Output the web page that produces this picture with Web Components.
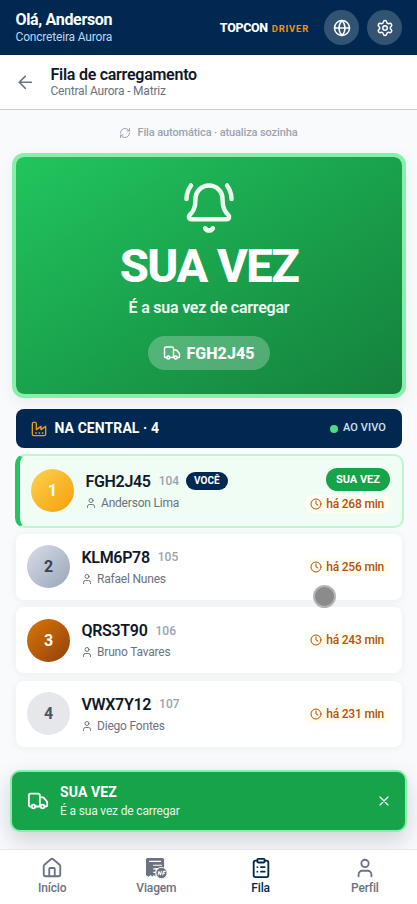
<!DOCTYPE html>
<html lang="pt-BR">
<head>
<meta charset="utf-8">
<title>Fila de carregamento</title>
<style>
html,body{margin:0;height:904px;overflow:hidden;background:#f8fafc;font-family:Roboto,"Liberation Sans",sans-serif}
</style>
</head>
<body>
<driver-app></driver-app>
<script>
const ICONS = {
  globe:'<circle cx="12" cy="12" r="10"/><path d="M12 2a14.5 14.5 0 0 0 0 20 14.5 14.5 0 0 0 0-20M2 12h20"/>',
  gear:'<path d="M9.671 4.136a2.34 2.34 0 0 1 4.659 0 2.34 2.34 0 0 0 3.319 1.915 2.34 2.34 0 0 1 2.33 4.033 2.34 2.34 0 0 0 0 3.831 2.34 2.34 0 0 1-2.33 4.033 2.34 2.34 0 0 0-3.319 1.915 2.34 2.34 0 0 1-4.659 0 2.34 2.34 0 0 0-3.32-1.915 2.34 2.34 0 0 1-2.33-4.033 2.34 2.34 0 0 0 0-3.831A2.34 2.34 0 0 1 6.35 6.051a2.34 2.34 0 0 0 3.319-1.915"/><circle cx="12" cy="12" r="3"/>',
  back:'<path d="m12 19-7-7 7-7M19 12H5"/>',
  refresh:'<path d="M3 12a9 9 0 0 1 9-9 9.75 9.75 0 0 1 6.74 2.74L21 8M21 3v5h-5M21 12a9 9 0 0 1-9 9 9.75 9.75 0 0 1-6.74-2.74L3 16M8 16H3v5"/>',
  bell:'<path d="M10.268 21a2 2 0 0 0 3.464 0M22 8c0-2.3-.8-4.3-2-6M3.262 15.326A1 1 0 0 0 4 17h16a1 1 0 0 0 .74-1.673C19.41 13.956 18 12.499 18 8A6 6 0 0 0 6 8c0 4.499-1.411 5.956-2.738 7.326M4 2C2.8 3.7 2 5.7 2 8"/>',
  truck:'<path d="M14 18V6a2 2 0 0 0-2-2H4a2 2 0 0 0-2 2v11a1 1 0 0 0 1 1h2M15 18H9M19 18h2a1 1 0 0 0 1-1v-3.65a1 1 0 0 0-.22-.624l-3.48-4.35A1 1 0 0 0 17.52 8H14"/><circle cx="17" cy="18" r="2"/><circle cx="7" cy="18" r="2"/>',
  factory:'<path d="M2 20a2 2 0 0 0 2 2h16a2 2 0 0 0 2-2V8l-7 5V8l-7 5V4a2 2 0 0 0-2-2H4a2 2 0 0 0-2 2ZM17 18h1M12 18h1M7 18h1"/>',
  user:'<path d="M19 21v-2a4 4 0 0 0-4-4H9a4 4 0 0 0-4 4v2"/><circle cx="12" cy="7" r="4"/>',
  clock:'<circle cx="12" cy="12" r="10"/><path d="M12 6v6l4 2"/>',
  close:'<path d="M18 6 6 18M6 6l12 12"/>',
  home:'<path d="M15 21v-8a1 1 0 0 0-1-1h-4a1 1 0 0 0-1 1v8"/><path d="M3 10a2 2 0 0 1 .709-1.528l7-5.999a2 2 0 0 1 2.582 0l7 5.999A2 2 0 0 1 21 10v9a2 2 0 0 1-2 2H5a2 2 0 0 1-2-2z"/>',
  list:'<rect x="8" y="2" width="8" height="4" rx="1"/><path d="M16 4h2a2 2 0 0 1 2 2v14a2 2 0 0 1-2 2H6a2 2 0 0 1-2-2V6a2 2 0 0 1 2-2h2M12 11h4M12 16h4M8 11h.01M8 16h.01"/>',
  invoice:'<path fill="currentColor" stroke="none" d="M2.500 1h16.500q1.800 0 1.800 1.800V12H11.500v9.200l-1.800-1.500-1.800 1.800-1.800-1.800-2 1.800-3-1.500V2.800Q1.100 1 2.500 1z"/><path stroke="#fff" stroke-width="1.300" stroke-linecap="butt" d="M4.500 4.700h13M9 9h9.500M9 13h4M9 16.800h2.500"/><circle cx="18" cy="17.500" r="6.200" fill="currentColor" stroke="#fff" stroke-width="1"/><path stroke="#fff" stroke-width="1.200" d="m14.400 19.500.8-3.800 1.800 3.800.8-3.800M19.300 19.500l.8-3.800h2M19.800 17.700h1.600"/>'
};
function define(name, html, update) {
  const t = document.createElement('template');
  t.innerHTML = html;
  customElements.define(name, class extends HTMLElement {
    connectedCallback() {
      if (this.shadowRoot) return;
      const root = this.attachShadow({mode:'open'});
      root.append(t.content.cloneNode(true));
      if (update) update(this, root);
    }
  });
}
define('ui-icon', `<style>:host{display:block;flex:none;line-height:0}svg{display:block;overflow:visible}</style><svg viewBox="0 0 24 24" fill="none" stroke="currentColor" stroke-linecap="round" stroke-linejoin="round"></svg>`,
  (el, root) => {
    const s = root.querySelector('svg');
    s.setAttribute('width', el.getAttribute('size'));
    s.setAttribute('height', el.getAttribute('size'));
    s.setAttribute('stroke-width', el.getAttribute('weight') || 2);
    s.innerHTML = ICONS[el.getAttribute('name')];
  });

define('app-header', `<style>
:host{display:flex;box-sizing:border-box;height:55px;background:#002850;color:#fff;padding:0 15px;align-items:center}
.who{flex:1;padding-bottom:1px;margin-left:.5px}
.hi{font-size:16px;line-height:19px;font-weight:700;letter-spacing:-.33px}
.co{font-size:12px;line-height:16px;color:#bcd7f3;letter-spacing:-.18px}
.brand{display:flex;align-items:baseline;gap:4px;margin-right:15px;font-weight:800;font-size:12.500px;letter-spacing:-.34px}
.brand span{color:#f0921e;font-size:9.500px;font-weight:700;letter-spacing:.75px}
.btn{width:35px;height:35px;border-radius:50%;background:#335373;display:grid;place-items:center}
.btn+.btn{margin-left:8px}
</style><div class="who"><div class="hi">Olá, Anderson</div><div class="co">Concreteira Aurora</div></div>
<div class="brand">TOPCON <span>DRIVER</span></div>
<div class="btn"><ui-icon name="globe" size="18"></ui-icon></div><div class="btn"><ui-icon name="gear" size="18"></ui-icon></div>`);

define('page-title', `<style>
:host{display:flex;box-sizing:border-box;height:55px;background:#fff;border-bottom:1px solid #c9ced5;padding:0 15px;align-items:center;gap:15px}
ui-icon{color:#6b7280}
.t{font-size:16px;line-height:18px;font-weight:600;color:#111827;letter-spacing:-.26px}
.s{font-size:12px;line-height:15px;color:#6b7280;letter-spacing:-.19px}
</style><ui-icon name="back" size="20.500"></ui-icon><div><div class="t"><slot name="title"></slot></div><div class="s"><slot></slot></div></div>`);

define('turn-card', `<style>
:host{display:flex;box-sizing:border-box;width:394px;height:245px;margin:0 0 0 12px;border:4px solid #86efac;border-radius:12px;background:linear-gradient(148deg,#22c55e,#1aa24c 50%,#15803d) padding-box,#86efac;flex-direction:column;align-items:center;color:#fff;box-shadow:0 5px 18px rgba(15,23,42,.06)}
ui-icon.bell{margin-top:24px;color:#ecfdf0}
.big{font-size:47px;line-height:54px;font-weight:800;margin-top:3.500px;letter-spacing:-1.5px}
.sub{font-size:16px;line-height:22px;font-weight:600;margin-top:4.500px;color:#effcf3;letter-spacing:-.22px}
.plate{display:flex;align-items:center;gap:5px;height:34px;margin-top:17px;padding:0 15px;border-radius:17px;background:rgba(255,255,255,.25);font-size:16px;font-weight:800;letter-spacing:.06px}
</style><ui-icon class="bell" name="bell" size="54"></ui-icon><div class="big">SUA VEZ</div><div class="sub">É a sua vez de carregar</div><div class="plate"><ui-icon name="truck" size="18"></ui-icon><span>FGH2J45</span></div>`);

define('section-bar', `<style>
:host{display:flex;box-sizing:border-box;height:39px;margin:11px 15px 0 16px;padding:0 16px 0 15px;border-radius:8px;background:#002850;color:#fff;align-items:center}
ui-icon{color:#f0981e;margin-right:7.500px}
.t{flex:1;font-size:14px;font-weight:700;letter-spacing:.08px;margin-top:-1px}
.live{display:flex;align-items:center;gap:5px;font-size:11px;font-weight:500;color:#cfe3f8;letter-spacing:.1px}
.live span{margin-top:-3px}
i{width:8px;height:8px;border-radius:50%;background:#4ade80}
</style><ui-icon name="factory" size="16"></ui-icon><div class="t">NA CENTRAL · 4</div><div class="live"><i></i><span>AO VIVO</span></div>`);

define('queue-row', `<style>
:host{display:flex;box-sizing:border-box;height:66px;margin:0 15px 0 16px;padding:0 12px 0 11px;border-radius:8px;background:#fff;align-items:center;box-shadow:0 1px 8px rgba(15,23,42,.06)}
:host([mine]){height:73.500px;margin:0 13px 0 15px;padding:0 12px 0 11px;border:2px solid #bbf7d0;border-left:5px solid #22c55e;border-radius:10px;background:#f0fdf4;box-shadow:none}
.pos{width:43px;height:43px;border-radius:50%;display:grid;place-items:center;font-size:16px;font-weight:700;color:#374151;flex:none}
:host([rank="1"]) .pos{background:linear-gradient(135deg,#fcd34d,#f59e0b);color:#fff}
:host([rank="2"]) .pos{background:linear-gradient(135deg,#d8dee8,#98a5b8)}
:host([rank="3"]) .pos{background:linear-gradient(135deg,#d97706,#92400e);color:#fff}
:host([rank="4"]) .pos{background:#e5e7eb;color:#4b5563}
.mid{flex:1;margin-left:11.500px;padding-top:2px}
.top{display:flex;align-items:center;height:21px}
.plate{font-size:16px;font-weight:600;color:#111827;letter-spacing:-.32px}
.num{font-size:12px;font-weight:500;color:#9ca3af;margin-left:8px}
.you{display:none;margin-left:7px;height:18px;line-height:18px;padding:0 8px;border-radius:9px;background:#002850;color:#fff;font-size:10px;font-weight:700}
.who{display:flex;align-items:center;gap:4px;font-size:12px;line-height:20px;color:#6b7280;margin-top:1px;letter-spacing:-.2px;margin-left:-.5px}
.right{display:flex;flex-direction:column;align-items:flex-end}
.turn{display:none;height:23px;line-height:23px;padding:0 10px;border-radius:12px;background:#16a34a;color:#fff;font-size:11px;font-weight:700;margin-bottom:4px}
.wait{display:flex;align-items:center;gap:4px;height:18px;padding:0 6px 0 5px;border-radius:6px;background:#fffcf1;color:#b45309;font-size:12px;font-weight:500;letter-spacing:-.2px}
:host([mine]) .you,:host([mine]) .turn{display:block}
</style><div class="pos"></div><div class="mid"><div class="top"><span class="plate"></span><span class="num"></span><span class="you">VOCÊ</span></div><div class="who"><ui-icon name="user" size="12"></ui-icon><span><slot></slot></span></div></div>
<div class="right"><div class="turn">SUA VEZ</div><div class="wait"><ui-icon name="clock" size="12"></ui-icon><span class="w"></span></div></div>`,
(el, root) => {
  root.querySelector('.pos').textContent = el.getAttribute('rank');
  root.querySelector('.plate').textContent = el.getAttribute('plate');
  root.querySelector('.num').textContent = el.getAttribute('num');
  root.querySelector('.w').textContent = 'há ' + el.getAttribute('min') + ' min';
});

define('turn-toast', `<style>
:host{display:flex;box-sizing:border-box;position:absolute;left:10px;top:770px;width:397px;height:62px;padding:0 13px 0 15px;border:2px solid #86efac;border-radius:10px;background:#16a34a;color:#fff;align-items:center;box-shadow:0 9px 22px rgba(15,23,42,.17)}
.m{flex:1;margin-left:11px}
.a{font-size:14px;line-height:19px;font-weight:700;letter-spacing:.1px}
.b{font-size:12px;line-height:18px;color:#e4f8ea;letter-spacing:-.16px}
</style><ui-icon name="truck" size="22"></ui-icon><div class="m"><div class="a">SUA VEZ</div><div class="b">É a sua vez de carregar</div></div><ui-icon name="close" size="16"></ui-icon>`);

define('nav-item', `<style>
:host{display:flex;flex-direction:column;align-items:center;flex:1;padding-top:7px;color:#6b7280;font-size:12px;line-height:16px;font-weight:500;letter-spacing:-.15px}
:host([active]){color:#00284f}
span{margin-top:1px}
</style><slot name="icon"></slot><span><slot></slot></span>`);

define('bottom-nav', `<style>:host{display:flex;box-sizing:border-box;position:absolute;left:0;top:849px;width:417px;height:55px;background:#fff;border-top:1px solid #e5e7eb}</style><slot></slot>`);

define('touch-dot', `<style>:host{position:absolute;left:313px;top:585px;width:23px;height:23px;box-sizing:border-box;border-radius:50%;background:#8b8b8b;border:2px solid #b5b5b5}</style>`);

define('driver-app', `<style>
:host{display:block;position:relative;height:904px;overflow:hidden;background:#f8fafc}
.note{display:flex;justify-content:center;align-items:center;gap:6px;height:43px;font-size:11px;box-sizing:border-box;padding-top:2px;font-weight:500;color:#9ca3af;letter-spacing:-.12px}
.rows{display:flex;flex-direction:column;gap:7.500px;margin-top:6px}
queue-row[mine]{margin-bottom:-1.500px}
</style>
<app-header></app-header>
<page-title><span slot="title">Fila de carregamento</span>Central Aurora - Matriz</page-title>
<div class="note"><ui-icon name="refresh" size="12"></ui-icon><span>Fila automática · atualiza sozinha</span></div>
<turn-card></turn-card>
<section-bar></section-bar>
<div class="rows">
<queue-row mine rank="1" plate="FGH2J45" num="104" min="268">Anderson Lima</queue-row>
<queue-row rank="2" plate="KLM6P78" num="105" min="256">Rafael Nunes</queue-row>
<queue-row rank="3" plate="QRS3T90" num="106" min="243">Bruno Tavares</queue-row>
<queue-row rank="4" plate="VWX7Y12" num="107" min="231">Diego Fontes</queue-row>
</div>
<touch-dot></touch-dot>
<turn-toast></turn-toast>
<bottom-nav>
<nav-item><ui-icon slot="icon" name="home" size="22"></ui-icon>Início</nav-item>
<nav-item><ui-icon slot="icon" name="invoice" size="22"></ui-icon>Viagem</nav-item>
<nav-item active><ui-icon slot="icon" name="list" size="22"></ui-icon>Fila</nav-item>
<nav-item><ui-icon slot="icon" name="user" size="22"></ui-icon>Perfil</nav-item>
</bottom-nav>`);
</script>
</body>
</html>
